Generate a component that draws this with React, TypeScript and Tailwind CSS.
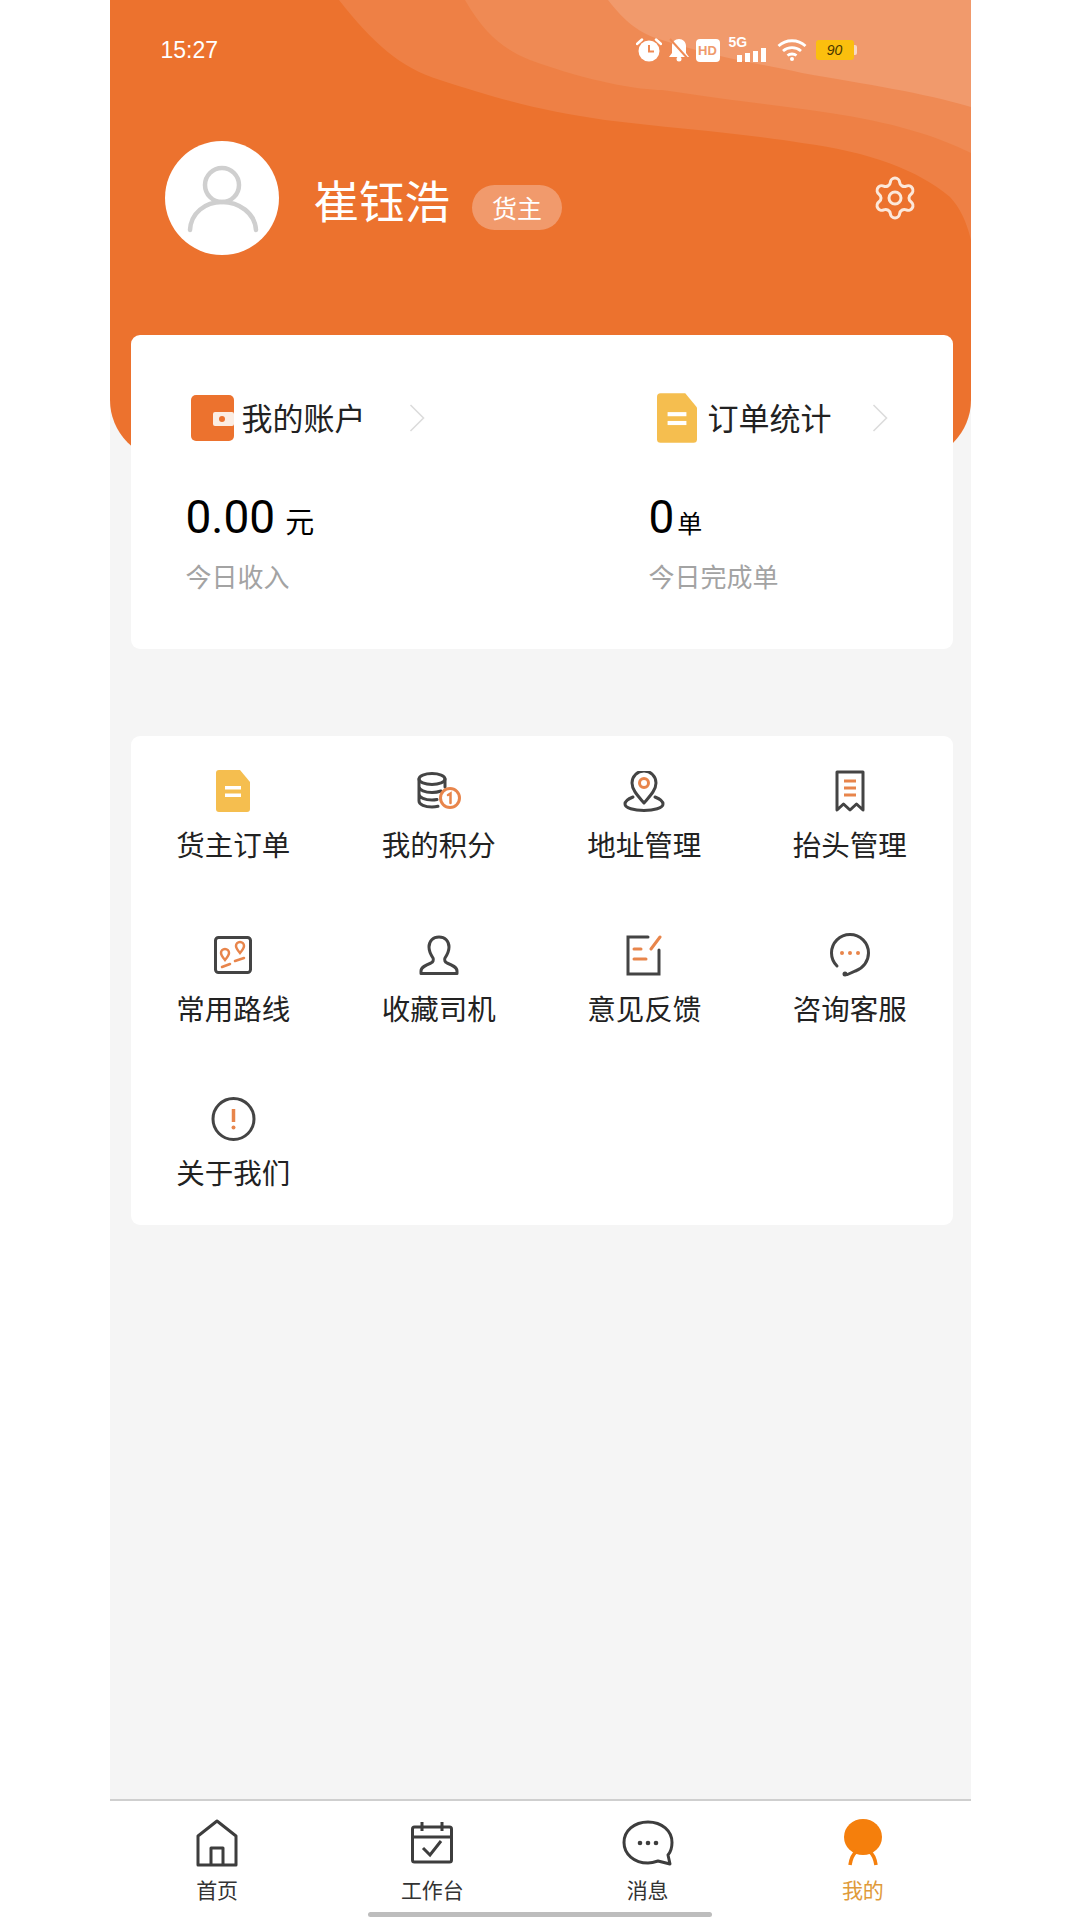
import { Settings } from "lucide-react";

const D = "#444444";
const O = "#E8854B";

function DocIcon({ w, h }: { w: number; h: number }) {
  return (
    <svg width={w} height={h} viewBox="0 0 34 42">
      <path d="M3 0H24L34 12V39a3 3 0 0 1-3 3H3a3 3 0 0 1-3-3V3a3 3 0 0 1 3-3Z" fill="#F5BE4F" />
      <rect x="9" y="16" width="16" height="3.5" fill="#fff" />
      <rect x="9" y="23.5" width="16" height="3.5" fill="#fff" />
    </svg>
  );
}

function WalletIcon() {
  return (
    <svg width="43" height="46" viewBox="0 0 43 46">
      <rect x="0" y="0" width="43" height="46" rx="5" fill="#EC722E" />
      <rect x="22" y="17" width="21" height="14" rx="2" fill="#FBEDE3" />
      <rect x="28" y="21" width="6" height="6" rx="3" fill="#EC722E" />
    </svg>
  );
}

function Chevron() {
  return (
    <svg width="16" height="28" viewBox="0 0 16 28">
      <path d="M1.5 1 14.5 14 1.5 27" fill="none" stroke="#DCDCDC" strokeWidth="1.6" />
    </svg>
  );
}

function CoinIcon() {
  return (
    <svg width="44" height="38" viewBox="0 0 44 38" fill="none" strokeLinecap="round">
      <ellipse cx="15" cy="7" rx="13" ry="5.5" stroke={D} strokeWidth="3" />
      <path d="M2 7V29c0 3.5 6 6 13 6 2 0 4-.2 6-.7M2 14.5c0 3.5 6 6 13 6 3 0 6-.4 9-1.5M2 22c0 3.5 6 6 13 6 1.500 0 3-.1 5-.5M28 7v8" stroke={D} strokeWidth="3" />
      <circle cx="33" cy="26" r="9.500" stroke={O} strokeWidth="3" fill="#fff" />
      <path d="M31 23l2.500-1.500V31" stroke={O} strokeWidth="2.500" />
    </svg>
  );
}

function PinIcon() {
  return (
    <svg width="42" height="41" viewBox="0 0 42 41" fill="none" strokeLinecap="round" strokeLinejoin="round">
      <path d="M21 32C15 25 9 19 9 12a12 12 0 0 1 24 0c0 7-6 13-12 20Z" stroke={D} strokeWidth="3" />
      <circle cx="21" cy="12" r="4.500" stroke={O} strokeWidth="3" />
      <path d="M10 26C5 28 2 30 2 33c0 4 9 6.500 19 6.500S40 37 40 33c0-3-3-5-8-7" stroke={D} strokeWidth="3" />
    </svg>
  );
}

function ReceiptIcon() {
  return (
    <svg width="30" height="42" viewBox="0 0 30 42" fill="none" strokeLinejoin="round">
      <path d="M2 2H28V40L21.500 34 15 40 8.500 34 2 40Z" stroke={D} strokeWidth="3" />
      <path d="M9 11H21M9 18H21M9 25H21" stroke={O} strokeWidth="2.800" />
    </svg>
  );
}

function RouteIcon() {
  return (
    <svg width="38" height="38" viewBox="0 0 38 38" fill="none" strokeLinecap="round">
      <rect x="1.500" y="1.500" width="35" height="35" rx="3" stroke={D} strokeWidth="3" />
      <path d="M11 24c-2.500-3-4-5-4-7a4 4 0 0 1 8 0c0 2-1.500 4-4 7ZM26 17c-2.500-3-4-5-4-7a4 4 0 0 1 8 0c0 2-1.500 4-4 7Z" stroke={O} strokeWidth="2.500" />
      <path d="M8 31l8-3M21 25l9-3" stroke={O} strokeWidth="2.500" />
    </svg>
  );
}

function DriverIcon() {
  return (
    <svg width="40" height="40" viewBox="0 0 40 40" fill="none" strokeLinejoin="round">
      <path d="M20 2c-6 0-10 4-10 10 0 5 2 8 4 11 1 2 0 4-2 5-5 2-10 4-10 8v2.500h36V36c0-4-5-6-10-8-2-1-3-3-2-5 2-3 4-6 4-11 0-6-4-10-10-10Z" stroke={D} strokeWidth="3" />
    </svg>
  );
}

function NoteIcon() {
  return (
    <svg width="36" height="41" viewBox="0 0 36 41" fill="none" strokeLinecap="round">
      <path d="M22 2H2V39H33V15" stroke={D} strokeWidth="3" />
      <path d="M25 14 34 2" stroke={O} strokeWidth="3" />
      <path d="M8 14H15M8 24H20" stroke={O} strokeWidth="3" />
    </svg>
  );
}

function ServiceIcon() {
  return (
    <svg width="40" height="44" viewBox="0 0 40 44" fill="none" strokeLinecap="round">
      <path d="M7 33C3.500 29.500 1.500 25 1.500 20a18.500 18.500 0 0 1 37 0c0 8-5 15-13 18l-8 3.500" stroke={D} strokeWidth="3" />
      <circle cx="15" cy="41" r="2.500" fill={D} />
      <circle cx="12" cy="20" r="2" fill={O} />
      <circle cx="20" cy="20" r="2" fill={O} />
      <circle cx="28" cy="20" r="2" fill={O} />
    </svg>
  );
}

function InfoIcon() {
  return (
    <svg width="45" height="44" viewBox="0 0 45 44" fill="none">
      <circle cx="22.500" cy="22" r="20.500" stroke={D} strokeWidth="3" />
      <path d="M22.500 12V25" stroke={O} strokeWidth="3.500" />
      <circle cx="22.500" cy="30.500" r="2" fill={O} />
    </svg>
  );
}

const menu = [
  { label: "货主订单", icon: <DocIcon w={34} h={42} /> },
  { label: "我的积分", icon: <CoinIcon /> },
  { label: "地址管理", icon: <PinIcon /> },
  { label: "抬头管理", icon: <ReceiptIcon /> },
  { label: "常用路线", icon: <RouteIcon /> },
  { label: "收藏司机", icon: <DriverIcon /> },
  { label: "意见反馈", icon: <NoteIcon /> },
  { label: "咨询客服", icon: <ServiceIcon /> },
  { label: "关于我们", icon: <InfoIcon /> },
];

const tabs = [
  {
    label: "首页",
    active: false,
    icon: (
      <svg width="42" height="48" viewBox="0 0 42 48" fill="none" strokeLinejoin="round">
        <path d="M2 46V17L21 2 40 17V46Z" stroke="#3d3d3d" strokeWidth="3" />
        <path d="M15 46V29H27V46" stroke="#3d3d3d" strokeWidth="3" />
      </svg>
    ),
  },
  {
    label: "工作台",
    active: false,
    icon: (
      <svg width="42" height="42" viewBox="0 0 42 42" fill="none">
        <rect x="1.500" y="5" width="39" height="35" rx="2" stroke="#3d3d3d" strokeWidth="3" />
        <path d="M1.500 15H40.500M11 0V9M31 0V9" stroke="#3d3d3d" strokeWidth="3" />
        <path d="M12 26l7 7 11-14" stroke="#3d3d3d" strokeWidth="3" />
      </svg>
    ),
  },
  {
    label: "消息",
    active: false,
    icon: (
      <svg width="52" height="46" viewBox="0 0 52 46" fill="none">
        <path d="M26 2C12 2 2 11 2 22.500S12 43 26 43c4 0 7-1 10-2l12 3-2-9c3-3.500 4-8 4-12.500C50 11 40 2 26 2Z" stroke="#3d3d3d" strokeWidth="3" strokeLinejoin="round" />
        <circle cx="18" cy="23" r="2.300" fill="#3d3d3d" />
        <circle cx="26" cy="23" r="2.300" fill="#3d3d3d" />
        <circle cx="34" cy="23" r="2.300" fill="#3d3d3d" />
      </svg>
    ),
  },
  {
    label: "我的",
    active: true,
    icon: (
      <svg width="40" height="48" viewBox="0 0 40 48" fill="none">
        <ellipse cx="20" cy="18" rx="19" ry="18" fill="#F57F0C" />
        <path d="M7 46c1-7 3-11 7-14M33 46c-1-7-3-11-7-14" stroke="#F57F0C" strokeWidth="3.500" />
      </svg>
    ),
  },
];

export default function App() {
  return (
    <div className="w-[1080px] h-[1920px] bg-white flex justify-center overflow-hidden font-['Noto_Sans_CJK_SC','Noto_Sans',sans-serif]">
      <div className="relative w-[861px] h-[1920px] bg-[#F5F5F5] flex flex-col">
        {/* Header */}
        <div className="relative h-[460px] shrink-0 overflow-hidden rounded-b-[60px] bg-[#EC722E]">
          <svg className="absolute inset-0" width="861" height="460" viewBox="0 0 861 460">
            <path d="M229 0C262 42 290 68 330 80 400 103 440 112 495 120 560 128 640 134 692 143 760 152 808 170 840 197 850 208 856 220 861 240V0Z" fill="#EE8045" />
            <path d="M355 0C375 35 395 50 420 60 480 82 530 90 552 90 620 100 670 106 720 113 780 122 825 135 861 153V0Z" fill="#EF8A54" />
            <path d="M498 0C515 22 530 34 552 40 600 56 650 64 692 73 760 85 810 92 861 107V0Z" fill="#F19A6C" />
          </svg>

          {/* Status bar */}
          <div className="relative h-[100px] pl-[51px] pr-[114px] flex items-center justify-between text-white">
            <span className="text-[23px] leading-none font-['Liberation_Sans',sans-serif] font-normal">15:27</span>
            <div className="flex items-center gap-[6px]">
              <svg width="26" height="24" viewBox="0 0 26 24">
                <circle cx="13" cy="13" r="10.500" fill="#fff" />
                <path d="M13 7v6.500h5" fill="none" stroke="#EF8A54" strokeWidth="2" />
                <path d="M1 6 6 1.500M25 6 20 1.500" stroke="#fff" strokeWidth="2.500" strokeLinecap="round" />
              </svg>
              <svg width="22" height="24" viewBox="0 0 22 24">
                <path d="M11 1c-4 0-7 3-7 7v7l-3 4h20l-3-4V8c0-4-3-7-7-7Z" fill="#fff" />
                <circle cx="11" cy="21" r="2.500" fill="#fff" />
                <path d="M2 1 21 22" stroke="#EF8A54" strokeWidth="2" />
              </svg>
              <div className="w-[24px] h-[23px] rounded-[4px] bg-white flex items-center justify-center text-[13px] leading-none font-bold text-[#EF9A6C] font-['Liberation_Sans',sans-serif]">HD</div>
              <div className="relative w-[38px] h-[24px] ml-[3px]">
                <span className="absolute left-0 top-[-3px] text-[14px] leading-[14px] font-bold font-['Liberation_Sans',sans-serif]">5G</span>
                <svg className="absolute left-[8px] bottom-0" width="30" height="14" viewBox="0 0 30 14">
                  <rect x="0" y="7" width="5" height="7" fill="#fff" />
                  <rect x="8" y="5" width="5" height="9" fill="#fff" />
                  <rect x="16" y="3" width="5" height="11" fill="#fff" />
                  <rect x="24" y="0" width="5" height="14" fill="#fff" />
                </svg>
              </div>
              <svg className="ml-[4px]" width="30" height="22" viewBox="0 0 30 22" fill="none">
                <path d="M1.500 7C9 0 21 0 28.500 7M6 12c5-4.500 13-4.500 18 0M10.500 16.500c2.500-2 6.500-2 9 0" stroke="#fff" strokeWidth="2.800" />
                <circle cx="15" cy="20" r="2" fill="#fff" />
              </svg>
              <div className="flex items-center ml-[3px]">
                <div className="w-[38px] h-[20px] rounded-[3px] bg-[#FBBF0E] flex items-center justify-center text-[14px] leading-none italic text-[#4a3600] font-['Liberation_Sans',sans-serif]">90</div>
                <div className="w-[3px] h-[10px] rounded-r-[2px] bg-[#F8D9C4]" />
              </div>
            </div>
          </div>

          {/* Profile */}
          <div className="relative mt-[41px] pl-[55px] pr-[52px] flex items-center">
            <div className="w-[114px] h-[114px] rounded-full bg-white shrink-0">
              <svg width="114" height="114" viewBox="0 0 114 114" fill="none" stroke="#CFCFCF" strokeWidth="4.500" strokeLinecap="round">
                <ellipse cx="57" cy="44" rx="17" ry="17" />
                <path d="M25 89C26 72 40 61 57 61S90 72 91 89" />
              </svg>
            </div>
            <span className="ml-[35px] mt-[2px] text-[45.500px] leading-[60px] text-white font-normal">崔钰浩</span>
            <span className="ml-[22px] mt-[18px] w-[90px] h-[45px] rounded-[23px] bg-[#F19A6C] text-white text-[25px] leading-[45px] text-center">货主</span>
            <Settings className="ml-auto text-[#FCE8DA]" size={48} strokeWidth={1.5} />
          </div>
        </div>

        {/* Account card */}
        <div className="relative z-10 -mt-[125px] ml-[21px] mr-[18px] h-[314px] rounded-[9px] bg-white pt-[59px] flex">
          <div className="w-[463px] pl-[55px] shrink-0">
            <div className="h-[48px] flex items-center pl-[5px]">
              <WalletIcon />
              <span className="ml-[8px] -mt-[3px] text-[31px] leading-[40px] text-[#222]">我的账户</span>
              <span className="ml-[43px]"><Chevron /></span>
            </div>
            <div className="mt-[50px] h-[50px] flex items-baseline text-black">
              <span className="text-[46px] leading-[50px] font-['Roboto',sans-serif] font-normal">0.00</span>
              <span className="ml-[10px] text-[29px] leading-[40px]">元</span>
            </div>
            <div className="mt-[14px] text-[26px] leading-[40px] text-[#A3A3A3]">今日收入</div>
          </div>
          <div className="flex-1 pl-[55px]">
            <div className="h-[48px] flex items-center pl-[8px]">
              <DocIcon w={40} h={50} />
              <span className="ml-[11px] -mt-[3px] text-[31px] leading-[40px] text-[#222]">订单统计</span>
              <span className="ml-[40px]"><Chevron /></span>
            </div>
            <div className="mt-[50px] h-[50px] flex items-baseline text-black">
              <span className="text-[46px] leading-[50px] font-['Roboto',sans-serif] font-normal">0</span>
              <span className="ml-[3px] text-[25px] leading-[40px]">单</span>
            </div>
            <div className="mt-[14px] text-[26px] leading-[40px] text-[#A3A3A3]">今日完成单</div>
          </div>
        </div>

        {/* Menu card */}
        <div className="mt-[87px] ml-[21px] mr-[18px] h-[489px] rounded-[9px] bg-white grid grid-cols-4 grid-rows-[164px_164px_161px]">
          {menu.map((m) => (
            <div key={m.label} className="flex flex-col items-center pt-[32px]">
              <div className="h-[46px] flex items-center justify-center">{m.icon}</div>
              <div className="mt-[10px] text-[28.500px] leading-[40px] text-[#222]">{m.label}</div>
            </div>
          ))}
        </div>

        {/* Tab bar */}
        <div className="mt-auto h-[121px] border-t-2 border-[#CFCFCF] bg-white grid grid-cols-4">
          {tabs.map((t) => (
            <div key={t.label} className="flex flex-col items-center pt-[17px]">
              <div className="h-[50px] flex items-center justify-center">{t.icon}</div>
              <div className={`mt-[6px] text-[21px] leading-[30px] ${t.active ? "text-[#E09A3A]" : "text-[#333]"}`}>{t.label}</div>
            </div>
          ))}
        </div>

        <div className="absolute left-[258px] bottom-[3px] w-[344px] h-[5px] rounded-full bg-[#BDBDBD]" />
      </div>
    </div>
  );
}
